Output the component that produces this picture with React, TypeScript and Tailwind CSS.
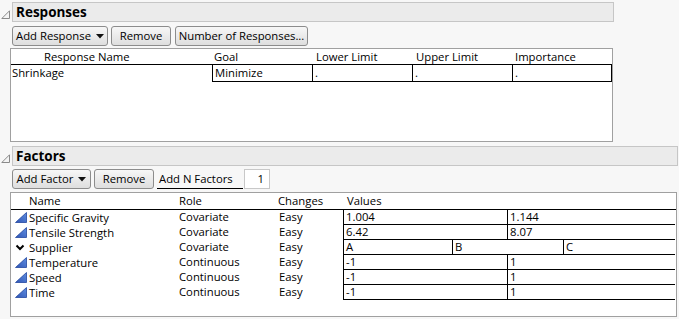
import React from "react";

const FONT = { fontFamily: '"Open Sans", "Noto Sans", sans-serif' };

function Disclosure() {
  return (
    <svg width="10" height="10" viewBox="0 0 10 10">
      <polygon points="8.5,0.8 8.5,8.5 0.8,8.5" fill="#f4f4f4" stroke="#8a8a8a" strokeWidth="1" />
    </svg>
  );
}

function Caret() {
  return (
    <svg width="8" height="5" viewBox="0 0 8 5" className="ml-[5px]">
      <polygon points="0,0 8,0 4,4.5" fill="#111" />
    </svg>
  );
}

function Btn({ w, children, caret }: { w: string; children: React.ReactNode; caret?: boolean }) {
  return (
    <div
      className={`${w} h-[20px] flex items-center justify-center rounded-[3px] border border-[#8c8c8c] bg-gradient-to-b from-[#f7f7f7] to-[#dedede] text-black leading-none`}
    >
      <span>{children}</span>
      {caret && <Caret />}
    </div>
  );
}

function ContIcon() {
  return (
    <svg width="12" height="11" viewBox="0 0 12 11">
      <defs>
        <linearGradient id="cg" x1="0" y1="1" x2="1" y2="0">
          <stop offset="0" stopColor="#2f55b5" />
          <stop offset="1" stopColor="#5f8ee0" />
        </linearGradient>
      </defs>
      <polygon points="0.5,10.5 11.5,0.5 11.5,10.5" fill="url(#cg)" stroke="#2246a0" strokeWidth="0.8" />
    </svg>
  );
}

function NomIcon() {
  return (
    <svg width="12" height="11" viewBox="0 0 12 11">
      <polyline points="1.5,3.5 5,7 8.5,3.5" fill="none" stroke="#000" strokeWidth="2" />
    </svg>
  );
}

type Factor = { name: string; role: string; kind: "c" | "n"; vals: string[] };

const factors: Factor[] = [
  { name: "Specific Gravity", role: "Covariate", kind: "c", vals: ["1.004", "1.144"] },
  { name: "Tensile Strength", role: "Covariate", kind: "c", vals: ["6.42", "8.07"] },
  { name: "Supplier", role: "Covariate", kind: "n", vals: ["A", "B", "C"] },
  { name: "Temperature", role: "Continuous", kind: "c", vals: ["-1", "1"] },
  { name: "Speed", role: "Continuous", kind: "c", vals: ["-1", "1"] },
  { name: "Time", role: "Continuous", kind: "c", vals: ["-1", "1"] },
];

export default function App() {
  return (
    <div className="w-[679px] h-[319px] bg-[#f7f7f7] overflow-hidden text-[11.3px] text-black" style={FONT}>
      {/* Responses header */}
      <div className="flex items-center pt-[2px]">
        <div className="w-[12px] flex justify-start pl-[1px] pt-[6px]">
          <Disclosure />
        </div>
        <div className="w-[602px] h-[20px] bg-[#ebebeb] border border-[#c6c6c6] flex items-center pl-[3px] font-bold text-[13.5px]">
          Responses
        </div>
      </div>
      {/* Buttons */}
      <div className="flex mt-[4px] ml-[12px]">
        <Btn w="w-[96px]" caret>
          Add Response
        </Btn>
        <div className="ml-[3px]">
          <Btn w="w-[60px]">Remove</Btn>
        </div>
        <div className="ml-[4px]">
          <Btn w="w-[133px]">Number of Responses...</Btn>
        </div>
      </div>
      {/* Responses table */}
      <div className="mt-[2px] ml-[10px] w-[603px] h-[94px] bg-white border border-[#a0a0a0]">
        <div className="grid grid-cols-[201px_100px_100px_100px_100px] h-[16px] border-b border-black leading-[16px]">
          <div className="pl-[33px]">Response Name</div>
          <div className="pl-[2px]">Goal</div>
          <div className="pl-[4px]">Lower Limit</div>
          <div className="pl-[4px]">Upper Limit</div>
          <div className="pl-[3px]">Importance</div>
        </div>
        <div className="grid grid-cols-[201px_100px_100px_100px_100px] h-[16px] leading-[16px]">
          <div className="pl-[1px]">Shrinkage</div>
          <div className="border-l border-b border-black pl-[2px]">Minimize</div>
          <div className="border-l border-b border-black pl-[2px]">.</div>
          <div className="border-l border-b border-black pl-[2px]">.</div>
          <div className="border-l border-b border-r border-black pl-[2px]">.</div>
        </div>
      </div>
      {/* Factors header */}
      <div className="flex items-center mt-[4px]">
        <div className="w-[12px] flex justify-start pl-[1px] pt-[6px]">
          <Disclosure />
        </div>
        <div className="w-[666px] h-[20px] bg-[#ebebeb] border border-[#c6c6c6] flex items-center pl-[3px] font-bold text-[13.5px]">
          Factors
        </div>
      </div>
      {/* Factor buttons */}
      <div className="flex items-center mt-[3px] ml-[12px]">
        <Btn w="w-[79px]" caret>
          Add Factor
        </Btn>
        <div className="ml-[3px]">
          <Btn w="w-[60px]">Remove</Btn>
        </div>
        <div className="ml-[3px] w-[86px] h-[20px] border-b border-black flex items-center pl-[2px] leading-none">
          Add N Factors
        </div>
        <div className="ml-[1px] w-[26px] h-[20px] bg-white border border-[#c8c8c8] flex items-center justify-end pr-[5px] leading-none">
          1
        </div>
      </div>
      {/* Factors table */}
      <div className="mt-[3px] ml-[10px] w-[667px] h-[125px] bg-white border border-[#a0a0a0]">
        <div className="grid grid-cols-[168px_99px_65px_1fr] h-[17px] border-b border-black leading-[16px]">
          <div className="pl-[18px]">Name</div>
          <div>Role</div>
          <div>Changes</div>
          <div className="pl-[4px]">Values</div>
        </div>
        {factors.map((f) => (
          <div key={f.name} className="grid grid-cols-[168px_99px_65px_1fr] h-[15px] leading-[14px]">
            <div className="flex items-center pl-[4px]">
              <div className="w-[12px] h-[14px] flex items-center">
                {f.kind === "c" ? <ContIcon /> : <NomIcon />}
              </div>
              <span className="ml-[2px]">{f.name}</span>
            </div>
            <div>{f.role}</div>
            <div className="pl-[1px]">Easy</div>
            <div
              className={`grid ${f.vals.length === 3 ? "grid-cols-[109px_111px_1fr]" : "grid-cols-[164px_1fr]"} border-b border-black mr-[1px]`}
            >
              {f.vals.map((v, i) => (
                <div key={i} className="border-l border-black pl-[2px]">
                  {v}
                </div>
              ))}
            </div>
          </div>
        ))}
      </div>
    </div>
  );
}
